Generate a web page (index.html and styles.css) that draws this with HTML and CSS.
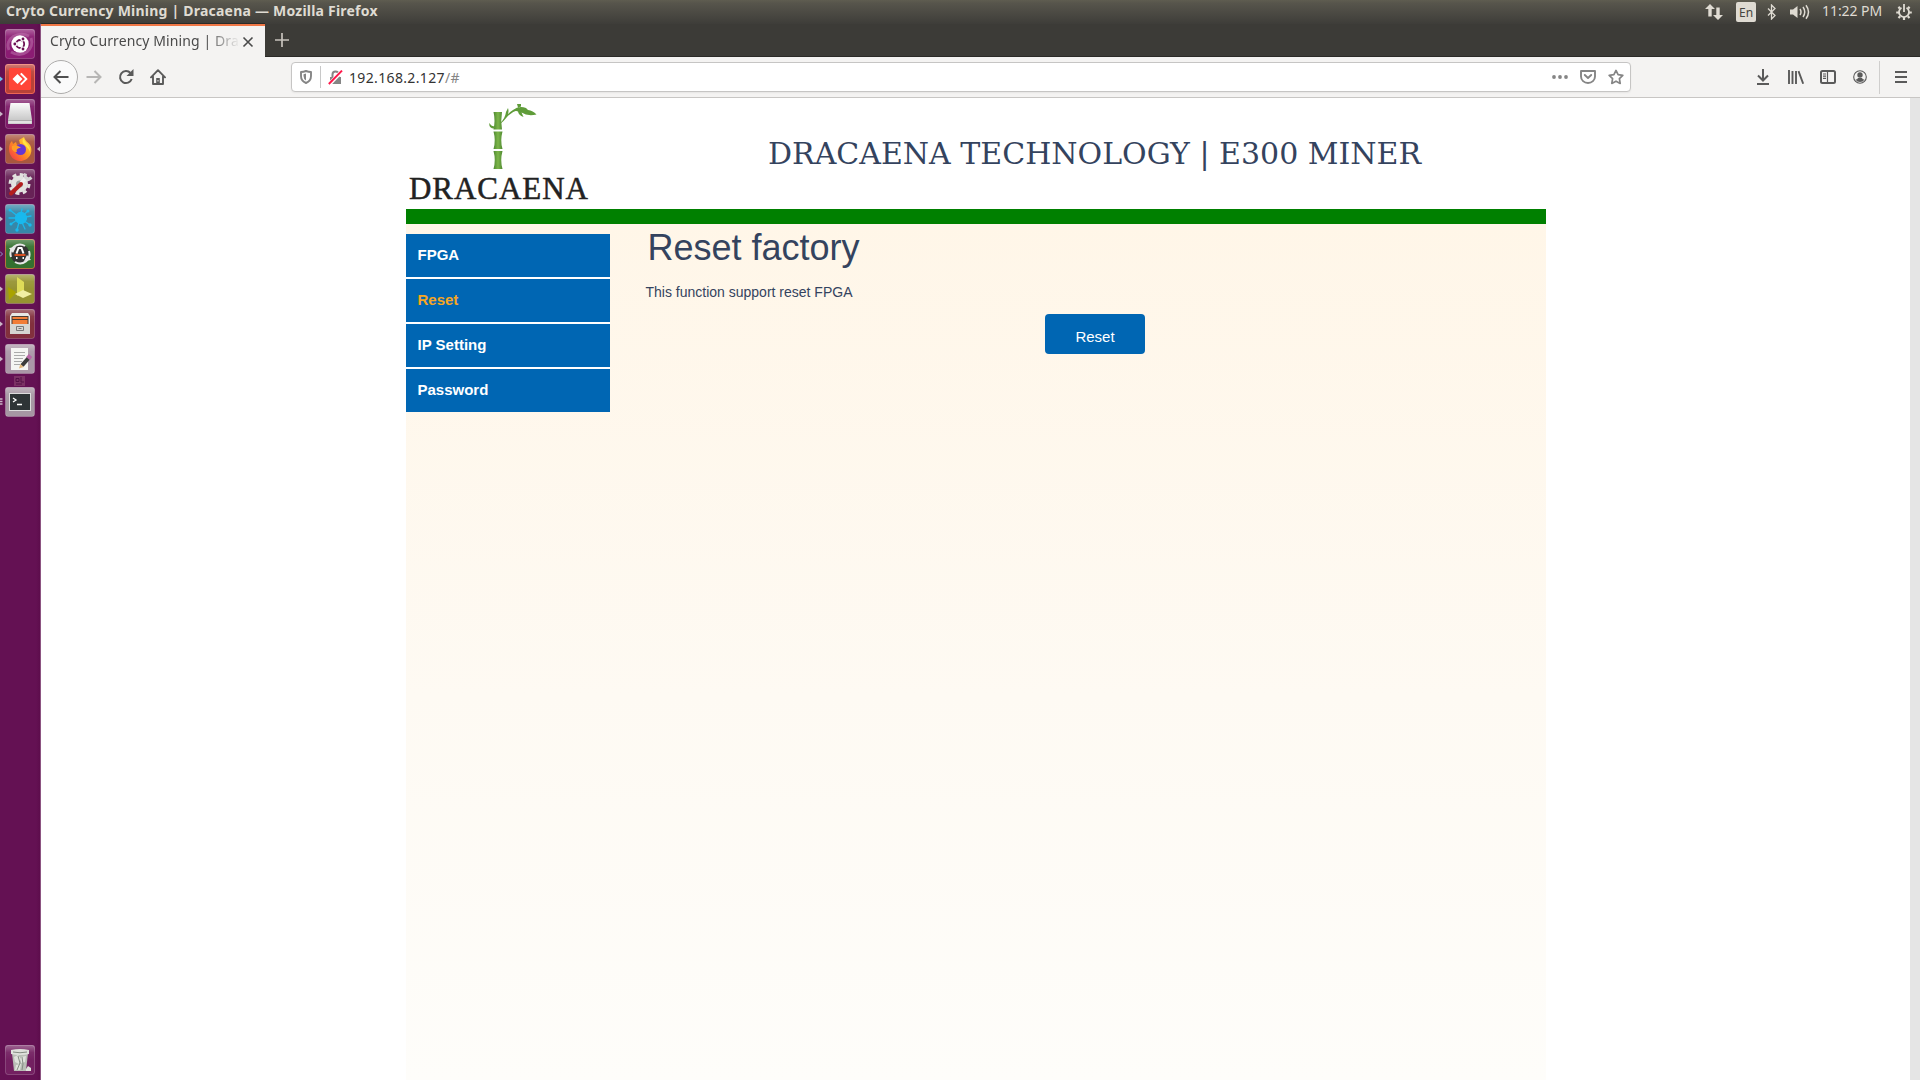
FILE: index.html
```html
<!DOCTYPE html>
<html lang="en">
<head>
<meta charset="utf-8">
<title>Cryto Currency Mining | Dracaena</title>
<link rel="stylesheet" href="styles.css">
</head>
<body>
<header class="panel">
  <span class="panel-title">Cryto Currency Mining | Dracaena — Mozilla Firefox</span>
  <div class="indicators">
    <svg class="ind-net" width="18" height="16" viewBox="0 0 18 16"><path fill="#dfdbd2" d="M5 0l5 5H6.700v7.500H3.300V5H0zM13 16l-5-5h3.300V3.500h3.400V11H18z"/></svg>
    <span class="ind-lang">En</span>
    <svg class="ind-bt" width="9" height="16" viewBox="0 0 9 16"><path fill="none" stroke="#dfdbd2" stroke-width="1.300" d="M1 4.500l7 7-3.500 3.500V1L8 4.500l-7 7"/></svg>
    <svg class="ind-vol" width="20" height="16" viewBox="0 0 20 16"><path fill="#dfdbd2" d="M0 5.500h3L7.500 2v12L3 10.500H0z"/><path fill="none" stroke="#dfdbd2" stroke-width="1.500" d="M10 5q2 3 0 6M13 3q3.500 5 0 10M16 1.200q5 6.800 0 13.600"/></svg>
    <span class="ind-clock">11:22 PM</span>
    <svg class="ind-gear" width="16" height="16" viewBox="0 0 16 16" fill="none" stroke="#dfdbd2"><path stroke-width="1.800" d="M5.500 3.700a5 5 0 1 0 5 0M8 0v8"/><path stroke-width="2.200" d="M3.900 4.400L2.400 2.900M12.100 4.400l1.500-1.500M.2 8.500H3M13 8.500h2.800M4.200 12.300l-1.700 1.700M11.800 12.300l1.700 1.700M8 13v3"/></svg>
  </div>
</header>
<div class="desktop">
  <nav class="launcher">
    <svg class="tile" viewBox="0 0 30 30">
      <defs>
        <linearGradient id="shine" x2="0" y2="1"><stop offset="0" stop-color="#fff" stop-opacity=".32"/><stop offset=".5" stop-color="#fff" stop-opacity=".06"/><stop offset="1" stop-color="#fff" stop-opacity="0"/></linearGradient>
        <linearGradient id="metal" x2="0" y2="1"><stop offset="0" stop-color="#fafafa"/><stop offset="1" stop-color="#bdbdbd"/></linearGradient>
        <linearGradient id="flame" x1="1" x2="0" y2="1"><stop offset="0" stop-color="#fff04a"/><stop offset=".45" stop-color="#ff9a1f"/><stop offset="1" stop-color="#f52c4c"/></linearGradient>
        <rect id="gloss" width="30" height="15" rx="2.500" fill="url(#shine)"/>
        <path id="pip" fill="#c9b7c6" d="M-5 12.500l3 2.500-3 2.500z"/>
      </defs>
      <rect class="plate" x=".5" y=".5" width="29" height="29" rx="2.500" fill="#8b1c73"/><use href="#gloss"/>
      <path d="M4 21C-1 9 14 2 24 7M26 9c4 11-8 21-20 14" fill="none" stroke="#c27ab2" stroke-width="3" opacity=".5"/>
      <circle cx="15" cy="15" r="8.700" fill="#fff"/><circle cx="15.200" cy="15" r="4" fill="none" stroke="#6a1052" stroke-width="1.800"/>
      <path d="M9.500 15h3M16.500 12l2-3M16.500 18l2 3" stroke="#fff" stroke-width="3.400"/><g fill="#6a1052"><circle cx="9.800" cy="15" r="1.400"/><circle cx="18" cy="10" r="1.400"/><circle cx="18" cy="20" r="1.400"/></g>
    </svg>
    <svg class="tile" viewBox="0 0 30 30"><rect class="plate hot" x=".5" y=".5" width="29" height="29" rx="2.500" fill="#b84238"/><use href="#gloss"/><rect x="4" y="4" width="22" height="22" rx="1.500" fill="#ff4538"/><path fill="#fff" d="M7.500 15l5-5 5 5-5 5zM15 10l1.500-1.200L22.700 15l-6.200 6.200L15 20l5-5z"/><path fill="#6cc5f0" d="M-5 12.500l3 2.500-3 2.500z"/></svg>
    <svg class="tile" viewBox="0 0 30 30"><rect class="plate" x=".5" y=".5" width="29" height="29" rx="2.500" fill="#7d1b68"/><use href="#gloss"/><path fill="url(#metal)" d="M5.500 4h19L27 21v4H3v-4z"/><path d="M3 21.500h24" stroke="#aaa"/><path fill="#e2e2e2" d="M3.500 22h23v2.500h-23z"/><use href="#pip"/></svg>
    <svg class="tile" viewBox="0 0 30 30"><rect class="plate" x=".5" y=".5" width="29" height="29" rx="2.500" fill="#a9573e"/><use href="#gloss"/><path fill="url(#flame)" d="M4 15c0-4 1-6 3-8l1 3 3-2 1 3 3-1-1-4 5-3c1 4 4 5 6 8 4 7-1 16-10 16C9 27 4 22 4 15z"/><circle cx="15.500" cy="15.500" r="5.500" fill="#6536d4"/><path fill="#ff9d25" d="M7 12c4-2 7 0 9 2-4 0-5 2-4 4-3 0-6-2-5-6z"/><path fill="#ffe345" d="M19 4c0 5 7 7 6 14-1-4-5-6-7-9-1-2 0-4 1-5z"/><use href="#pip"/><path fill="#c9b7c6" d="M35 12.500l-3 2.500 3 2.500z"/></svg>
    <svg class="tile" viewBox="0 0 30 30"><rect class="plate" x=".5" y=".5" width="29" height="29" rx="2.500" fill="#672256"/><use href="#gloss"/><circle cx="14.500" cy="15" r="8.500" fill="#e2e2df"/><circle cx="14.500" cy="15" r="9.500" fill="none" stroke="#e2e2df" stroke-width="3" stroke-dasharray="4 3.460"/><circle cx="14.500" cy="15" r="3.500" fill="#999"/><path d="M16 14l5-5" stroke="#eee" stroke-width="3.500"/><path d="M20.500 4.500c-1.500 5 2.500 7 6 4" fill="none" stroke="#d5d5d5" stroke-width="3"/><path d="M6 24.500L16 15" stroke="#b31e1e" stroke-width="4" stroke-linecap="round"/></svg>
    <svg class="tile" viewBox="0 0 30 30"><rect class="plate" x=".5" y=".5" width="29" height="29" rx="2.500" fill="#3787a8"/><use href="#gloss"/><g stroke="#19b9ee" stroke-width="1.300" stroke-linecap="round"><circle cx="16" cy="14" r="5.500" fill="#19b9ee"/><path d="M15 14L5 6M15 14l2-9M15 14l8-7M15 14l11-2M15 14l10 7M15 14l5 11M15 14l-3 12M15 14L6 20M15 14L4 14"/></g><g fill="#19b9ee"><circle cx="5" cy="6" r="1.500"/><circle cx="23" cy="7" r="1.500"/><circle cx="25" cy="21" r="1.700"/><circle cx="12" cy="26" r="1.700"/><circle cx="6" cy="20" r="1.500"/></g><use href="#pip"/></svg>
    <svg class="tile" viewBox="0 0 30 30"><rect class="plate warm" x=".5" y=".5" width="29" height="29" rx="2.500" fill="#34702f"/><use href="#gloss"/><circle cx="15" cy="15" r="9.500" fill="#333"/><path d="M6 18A9.500 9.500 0 0 1 20 7M24 12A9.500 9.500 0 0 1 10 23" fill="none" stroke="#e8e8e8" stroke-width="2"/><path fill="#e8e8e8" d="M4 9l7-1-3 6zM26 21l-7 1 3-6z"/><path d="M11.500 14.500L13.500 9h3l2 5.500M11 19h1.500M17.500 19H19" fill="none" stroke="#fff" stroke-width="2"/><path d="M9.500 16h11" stroke="#e95420" stroke-width="1.800"/><path fill="none" stroke="#8c9ad0" d="M-5 12.500l2.500 2.500-2.500 2.500"/></svg>
    <svg class="tile" viewBox="0 0 30 30"><rect class="plate" x=".5" y=".5" width="29" height="29" rx="2.500" fill="#969332"/><use href="#gloss"/><path fill="#dedb58" d="M12 3l7 5v10l-7 4z"/><path fill="#a9a300" d="M3 13l8 5-1 2-6 6z"/><path fill="#f1efa4" d="M10 20l8-4 9 4-9 4z"/><use href="#pip"/></svg>
    <svg class="tile" viewBox="0 0 30 30"><rect class="plate" x=".5" y=".5" width="29" height="29" rx="2.500" fill="#82303d"/><use href="#gloss"/><path fill="#e7e7e4" d="M7 4h16l2 3v18H5V7z"/><path fill="#493b33" d="M6.500 7h17v8h-17z"/><path fill="#f17d36" d="M7.500 8h15v2h-15zM7.500 11h15v4h-15z"/><path fill="#d6d6d2" d="M5 15h20v10H5z"/><path fill="none" stroke="#777" d="M11.500 17.500h7v4h-7zM13.500 19.500h3"/><use href="#pip"/></svg>
    <svg class="tile" viewBox="0 0 30 30"><rect class="plate" x=".5" y=".5" width="29" height="29" rx="2.500" fill="#aa97a7"/><use href="#gloss"/><path fill="#f5f5f3" d="M6 4h17v22H6z"/><path stroke="#aaa" d="M9 8.500h11M9 11.500h11M9 14.500h9M9 17.500h8M9 20.500h6"/><path d="M17 21.500l7-8" stroke="#3b3b3b" stroke-width="4"/><path d="M23 14.500l2.500-3" stroke="#b966a7" stroke-width="4.500"/><path fill="#e4b779" d="M15.300 20l3.400 3-4.700 1.500z"/><use href="#pip"/></svg>
    <svg class="mini" viewBox="0 0 11 10"><path fill="#89456f" opacity=".65" d="M0 0h11v10H0z"/><path fill="none" stroke="#511044" d="M2 2.500h3v3H2zM7 1v5h3M2 8h6"/></svg>
    <svg class="tile" viewBox="0 0 30 30"><rect class="plate" x=".5" y=".5" width="29" height="29" rx="2.500" fill="#a697a3"/><use href="#gloss"/><path fill="#ddd" d="M4 6h22v18H4z"/><path fill="#2e3436" d="M5 7h20v16H5z"/><path fill="none" stroke="#fff" stroke-width="1.300" d="M8 11l3 2-3 2M12 17.500h5"/><path stroke="#c9b7c6" stroke-width="1.300" d="M-5 12h2.500M-5 14.500h2.500M-5 17h2.500"/></svg>
    <svg class="tile trash" viewBox="0 0 30 30"><rect class="plate" x=".5" y=".5" width="29" height="29" rx="2.500" fill="#732061"/><use href="#gloss"/><path fill="#b9beb6" d="M7 8h16l-2 18H9z"/><path fill="#dfe2dc" d="M6 5q9-2 18 0v4q-9 2-18 0zM9 12l4-2 3 4-2 5-4-2zM16 12l5-1-1 6-4 1zM11 20l5-1-1 6h-5zM21 24l2-3 3 2v3h-5z"/><path d="M8 7q7 1.500 14 0M13 11l2 7-3 7M17 12l1 7-1 6" fill="none" stroke="#848c82"/></svg>
  </nav>
  <div class="browser">
    <div class="tabs">
      <div class="tab"><span class="tab-title">Cryto Currency Mining | Dra</span><svg width="12" height="12" viewBox="0 0 12 12"><path d="M1.500 1.500l9 9M10.500 1.500l-9 9" stroke="#4a4a4a" stroke-width="1.600"/></svg></div>
      <svg class="newtab" width="14" height="14" viewBox="0 0 14 14"><path d="M7 0v14M0 7h14" stroke="#c8c4bd" stroke-width="1.700"/></svg>
    </div>
    <div class="toolbar">
      <div class="nav-buttons">
        <span class="back"><svg width="16" height="14" viewBox="0 0 16 14" fill="none" stroke="#4f4f4f" stroke-width="2"><path d="M15.500 7H1.500M7.500 1l-6 6 6 6"/></svg></span>
        <svg width="16" height="14" viewBox="0 0 16 14" fill="none" stroke="#b7b6b5" stroke-width="2"><path d="M.5 7h14M8.500 1l6 6-6 6"/></svg>
        <svg width="16" height="16" viewBox="0 0 16 16"><path d="M12.500 4A6 6 0 1 0 13.700 10" fill="none" stroke="#5a5a5a" stroke-width="2"/><path fill="#5a5a5a" d="M15.500 0v7H8.500z"/></svg>
        <svg width="16" height="16" viewBox="0 0 16 16"><path d="M1 8.300L8 1.200l7 7.100M3 7.500V15h10V7.500" fill="none" stroke="#5a5a5a" stroke-width="1.900" stroke-linejoin="round" stroke-linecap="round"/><path fill="#5a5a5a" d="M6.200 9h3.600v6H6.200z"/><path fill="#f4f3f2" d="M7.500 11h1v1.500h-1z"/></svg>
      </div>
      <div class="urlbar">
        <svg width="12" height="14" viewBox="0 0 12 14"><path d="M1 2q2.500 0 5-1 2.500 1 5 1v4q0 5-5 7-5-2-5-7z" fill="none" stroke="#858585" stroke-width="1.900" stroke-linejoin="round"/><path fill="#858585" d="M6 3.500v7Q3.500 9 3.500 6V4.200z"/></svg>
        <span class="url-sep"></span>
        <svg width="15" height="15" viewBox="0 0 15 15"><path fill="#858585" d="M2 7h11v7H2z"/><path d="M4.500 7V4.500a3 3 0 0 1 6 0V7" fill="none" stroke="#858585" stroke-width="2"/><path d="M1 14.500L14.500 .5" stroke="#fff" stroke-width="4"/><path d="M.8 14L14 .6" stroke="#ff1749" stroke-width="1.900"/></svg>
        <span class="url">192.168.2.127<i>/#</i></span>
        <div class="url-actions">
          <svg width="16" height="4" viewBox="0 0 16 4" fill="#858585"><circle cx="2" cy="2" r="1.900"/><circle cx="8" cy="2" r="1.900"/><circle cx="14" cy="2" r="1.900"/></svg>
          <svg width="16" height="14" viewBox="0 0 16 14" fill="none" stroke="#858585" stroke-width="1.900" stroke-linejoin="round" stroke-linecap="round"><path d="M1 1h14v5.500a7 6.500 0 0 1-14 0zM4.800 5L8 8l3.200-3"/></svg>
          <svg width="16" height="16" viewBox="0 0 16 16"><path d="M8 1.400l2.100 4.300 4.700.7-3.400 3.300.8 4.700L8 12.200l-4.200 2.200.8-4.700L1.200 6.400l4.700-.7z" fill="none" stroke="#858585" stroke-width="1.700" stroke-linejoin="round"/></svg>
        </div>
      </div>
      <div class="tools">
        <svg width="12" height="16" viewBox="0 0 12 16" fill="none" stroke="#5a5a5a" stroke-width="2"><path d="M6 0v11M1 6.500l5 5 5-5M0 15h12"/></svg>
        <svg class="t-lib" width="16" height="14" viewBox="0 0 16 14" fill="none" stroke="#5a5a5a" stroke-width="1.900"><path d="M1 0v14M4.500 1v13M8 1v13M10.500 1.200l4.700 12.500"/></svg>
        <svg width="16" height="14" viewBox="0 0 16 14" fill="none" stroke="#5a5a5a"><rect x="1" y="1" width="14" height="12" rx="1.500" stroke-width="2"/><path stroke-width="1.200" d="M7.500 1v12M3 4h3M3 6.200h3M3 8.400h3"/></svg>
        <svg class="t-acc" width="14" height="14" viewBox="0 0 14 14"><circle cx="7" cy="7" r="6.300" fill="none" stroke="#5a5a5a" stroke-width="1.100"/><circle cx="7" cy="5" r="2.700" fill="#5a5a5a"/><path fill="#5a5a5a" d="M2.500 9.500q2 0 2.500-1.500h4q.5 1.500 2.500 1.500Q10 12 7 12T2.500 9.500z"/></svg>
        <span class="tools-sep"></span>
        <svg width="12" height="12" viewBox="0 0 12 12"><path d="M0 1h12M0 6h12M0 11h12" stroke="#5a5a5a" stroke-width="1.900"/></svg>
      </div>
    </div>
    <div class="viewport">
      <main class="container">
        <div class="masthead">
          <div class="logo">
            <svg width="50" height="66" viewBox="0 0 50 66">
              <defs><linearGradient id="stalk"><stop offset="0" stop-color="#4f8a32"/><stop offset=".5" stop-color="#7db54a"/><stop offset="1" stop-color="#4f8a32"/></linearGradient></defs>
              <path fill="url(#stalk)" d="M4.500 8h8.500q-1.500 8.500 0 17.500H4.500q2-9 0-17.500zM4.500 27.500h9q-2.500 9 0 17.500h-9q2.500-8.500 0-17.500zM4.500 47h9q-2.500 9 0 18h-9q2.500-9 0-18z"/>
              <path fill="#5f9c39" d="M6 24.500Q0 25 .2 19l1.300 1.500Q3 23 6 22zM11 19q5-4 6-11l2-4q1 3 0 6 5-5 10-6v2q-7 2-11 7-3 4-7 7zM24 6q6-5 13-2l2 2q5 .5 8.500 4.500-9 2-15-2l2 4.500q-5-2-5.500-5.500zM28 0h4v2.500l-3 1z"/>
            </svg>
            <span class="wordmark">DRACAENA</span>
          </div>
          <h2 class="site-title">DRACAENA TECHNOLOGY | E300 MINER</h2>
        </div>
        <div class="content">
          <ul class="menu">
            <li><a>FPGA</a></li>
            <li><a class="current">Reset</a></li>
            <li><a>IP Setting</a></li>
            <li><a>Password</a></li>
          </ul>
          <section class="pane">
            <h1>Reset factory</h1>
            <p>This function support reset FPGA</p>
            <button class="reset" type="button">Reset</button>
          </section>
        </div>
      </main>
      <div class="scrollbar"></div>
    </div>
  </div>
</div>
</body>
</html>
```

FILE: styles.css
```css
* { box-sizing: border-box; }
body { margin: 0; width: 1920px; height: 1080px; overflow: hidden; display: flex; flex-direction: column; background: #fff; font-family: "Liberation Sans", sans-serif; color: #34435e; }
svg { display: block; flex: none; }

.panel { height: 24px; flex: none; display: flex; align-items: center; justify-content: space-between; padding: 0 8px 0 6px; background: linear-gradient(#5f5d50, #57554c 3px, #3e3d39); color: #dfdbd2; font-family: "Noto Sans", sans-serif; white-space: nowrap; }
.panel-title { font-size: 14px; line-height: 22px; height: 24px; font-weight: 700; letter-spacing: .22px; }
.indicators { display: flex; align-items: center; }
.ind-lang { width: 20px; height: 20px; margin: 0 11px 0 13px; border-radius: 2px; background: #dfdbd2; color: #45443f; font-size: 12px; line-height: 21px; text-align: center; }
.ind-vol { margin-left: 14px; }
.ind-clock { width: 61px; height: 24px; margin: 0 13px 0 12px; font-size: 14px; line-height: 22px; letter-spacing: -.05px; }

.desktop { flex: 1; min-height: 0; display: flex; }
.launcher { width: 41px; flex: none; display: flex; flex-direction: column; align-items: center; gap: 5px; padding: 5px 1px 5px 0; background: linear-gradient(90deg, #641153 36px, #5d0d4c); border-right: 1px solid #8c5481; }
.tile { width: 30px; height: 30px; overflow: visible; }
.plate { stroke: rgba(255,255,255,.2); }
.hot { stroke: #ed6654; }
.warm { stroke: #b9733f; }
.mini { width: 11px; height: 10px; margin: -3px 0 -4px; }
.trash { margin-top: auto; }

.browser { flex: 1; min-width: 0; display: flex; flex-direction: column; }
.tabs { height: 33px; flex: none; display: flex; align-items: center; background: #3c3b37; border-bottom: 1px solid #2b2a27; }
.tab { width: 224px; height: 33px; align-self: flex-start; display: flex; align-items: center; justify-content: space-between; padding: 0 11px 0 9px; background: #f4f3f2; border-top: 2px solid #f07746; box-shadow: 0 -1px #2c2b28; }
.tab-title { white-space: nowrap; font: 14px/20px "Noto Sans", sans-serif; letter-spacing: .1px; margin-top: -2px; color: #4a4a4a; -webkit-mask-image: linear-gradient(90deg, #000 156px, transparent 190px); mask-image: linear-gradient(90deg, #000 156px, transparent 190px); }
.newtab { margin-left: 10px; }
.toolbar { height: 41px; flex: none; display: flex; align-items: center; background: #f4f3f2; border-bottom: 1px solid #c8c6c4; }
.nav-buttons { display: flex; align-items: center; width: 250px; padding-left: 3px; gap: 16px; }
.back { width: 34px; height: 34px; border: 1px solid #adacab; border-radius: 50%; background: #fafafa; display: flex; align-items: center; justify-content: center; margin-right: -8px; }
.urlbar { width: 1340px; height: 30px; display: flex; align-items: center; padding: 0 6px 0 8px; background: #fff; border: 1px solid #c6c5c4; border-radius: 4px; box-shadow: 0 1px 2px rgba(0,0,0,.06); }
.url-sep { width: 1px; height: 22px; margin: 0 7px 0 8px; background: #c8c8c8; }
.url { margin-left: 6px; font: 14px "Noto Sans", sans-serif; letter-spacing: .35px; color: #333; }
.url i { font-style: normal; color: #858585; }
.url-actions { margin-left: auto; display: flex; align-items: center; gap: 12px; }
.tools { margin-left: auto; display: flex; align-items: center; gap: 16px; padding-right: 13px; }
.t-lib { margin-left: 3px; }
.t-acc { margin-left: 1px; }
.tools-sep { width: 1px; height: 33px; background: #cfcecd; margin: 0 -1px 0 -4px; }

.viewport { flex: 1; min-height: 0; display: flex; background: #fff; }
.scrollbar { width: 10px; background: #e5e5e5; margin-left: auto; }
.container { width: 1140px; margin-left: 365px; display: flex; flex-direction: column; }
.masthead { height: 126px; flex: none; display: flex; border-bottom: 15px solid #008000; }
.logo { width: 362px; padding-top: 6px; display: flex; flex-direction: column; align-items: flex-start; }
.logo svg { margin-left: 83px; }
.wordmark { margin: 2px 0 0 3px; font: 31px/34px "Liberation Serif", serif; letter-spacing: .95px; color: #222; -webkit-text-stroke: .5px #222; white-space: nowrap; }
.site-title { margin: 36px 0 0; font: 30px/40px "DejaVu Serif", serif; white-space: nowrap; }
.content { flex: 1; display: flex; background: linear-gradient(#fff6e8, #fefaf3 55%, #fefdfa); }
.menu { width: 204px; margin: 10px 0 0; padding: 0; list-style: none; }
.menu li { height: 45px; border-bottom: 2px solid #fff; }
.menu li:last-child { border: 0; height: 43px; }
.menu a { display: block; height: 43px; padding-left: 11.5px; background: #0066b3; color: #fff; font-size: 15px; font-weight: 700; line-height: 42px; }
.menu a.current { color: #f5a623; }
.pane { flex: 1; padding-left: 35.500px; display: flex; flex-direction: column; }
h1 { margin: 4px 0 0 2px; font-size: 36px; font-weight: 400; line-height: 40px; }
p { margin: 14px 0 0; font-size: 14px; line-height: 20px; }
.reset { width: 100px; height: 40px; margin: 12px 0 0 399.500px; padding: 5px 0 0; border: 0; border-radius: 4px; background: #0066b3; color: #fff; font: 15px "Liberation Sans", sans-serif; }
```
